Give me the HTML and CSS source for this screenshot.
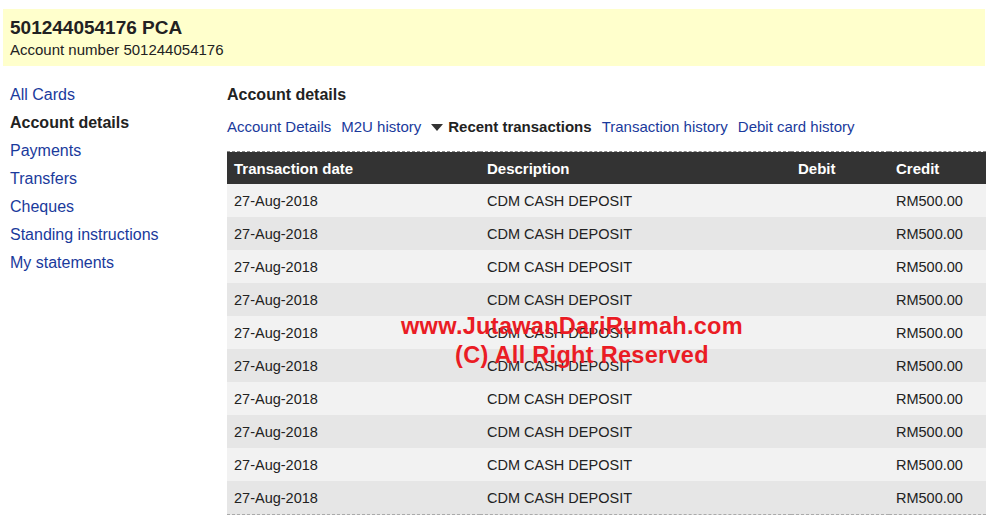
FILE: index.html
```html
<!DOCTYPE html>
<html lang="en">
<head>
  <meta charset="UTF-8" />
  <meta name="viewport" content="width=device-width, initial-scale=1.0"/>
  <title>Account details</title>
  <link rel="stylesheet" href="styles.css">
</head>
<body>
  <div class="account-head">
    <h1>501244054176 PCA</h1>
    <div class="acc-no">Account number 501244054176</div>
  </div>

  <div class="page">
    <ul class="side-nav">
      <li><a href="#">All Cards</a></li>
      <li class="current">Account details</li>
      <li><a href="#">Payments</a></li>
      <li><a href="#">Transfers</a></li>
      <li><a href="#">Cheques</a></li>
      <li><a href="#">Standing instructions</a></li>
      <li><a href="#">My statements</a></li>
    </ul>

    <div class="main">
      <h2>Account details</h2>
      <div class="tabs">
        <a href="#">Account Details</a>
        <a href="#">M2U history</a>
        <span class="active"><span class="caret"></span>Recent transactions</span>
        <a href="#">Transaction history</a>
        <a href="#">Debit card history</a>
      </div>

      <table class="tx">
        <thead>
          <tr>
            <th class="c-date">Transaction date</th>
            <th class="c-desc">Description</th>
            <th class="c-debit">Debit</th>
            <th class="c-credit">Credit</th>
          </tr>
        </thead>
        <tbody>
          <tr><td>27-Aug-2018</td><td>CDM CASH DEPOSIT</td><td></td><td>RM500.00</td></tr>
          <tr><td>27-Aug-2018</td><td>CDM CASH DEPOSIT</td><td></td><td>RM500.00</td></tr>
          <tr><td>27-Aug-2018</td><td>CDM CASH DEPOSIT</td><td></td><td>RM500.00</td></tr>
          <tr><td>27-Aug-2018</td><td>CDM CASH DEPOSIT</td><td></td><td>RM500.00</td></tr>
          <tr><td>27-Aug-2018</td><td>CDM CASH DEPOSIT</td><td></td><td>RM500.00</td></tr>
          <tr><td>27-Aug-2018</td><td>CDM CASH DEPOSIT</td><td></td><td>RM500.00</td></tr>
          <tr><td>27-Aug-2018</td><td>CDM CASH DEPOSIT</td><td></td><td>RM500.00</td></tr>
          <tr><td>27-Aug-2018</td><td>CDM CASH DEPOSIT</td><td></td><td>RM500.00</td></tr>
          <tr><td>27-Aug-2018</td><td>CDM CASH DEPOSIT</td><td></td><td>RM500.00</td></tr>
          <tr><td>27-Aug-2018</td><td>CDM CASH DEPOSIT</td><td></td><td>RM500.00</td></tr>
        </tbody>
      </table>

      <div class="watermark">
        <div class="wm-site">www.JutawanDariRumah.com</div>
        <div class="wm-copy">(C) All Right Reserved</div>
      </div>
    </div>
  </div>
</body>
</html>
```

FILE: styles.css
```css
body {
  margin: 0;
  font-family: "Liberation Sans", Arial, sans-serif;
  color: #222;
  background: #fff;
}
a {
  color: #1a3a9c;
  text-decoration: none;
}
.account-head {
  margin: 9px 1px 0 3px;
  padding: 7px 7px 7px;
  background-color: #ffffcc;
}
.account-head h1 {
  margin: 0;
  font-size: 19px;
  line-height: 23px;
  font-weight: bold;
}
.acc-no {
  font-size: 15px;
  line-height: 19px;
  margin-top: 1px;
}
.page {
  display: flex;
  margin-top: 15px;
}
.side-nav {
  list-style: none;
  margin: 0;
  padding: 0 0 0 10px;
  width: 217px;
  font-size: 16px;
  line-height: 28px;
}
.side-nav .current {
  font-weight: bold;
}
.main {
  flex: 1;
  position: relative;
}
.main h2 {
  margin: 0;
  font-size: 16px;
  line-height: 28px;
}
.tabs {
  display: flex;
  align-items: center;
  gap: 10px;
  margin-top: 6px;
  font-size: 15px;
  line-height: 24px;
}
.tabs .active {
  font-weight: bold;
  display: flex;
  align-items: center;
}
.caret {
  display: inline-block;
  width: 0;
  height: 0;
  border-left: 6px solid transparent;
  border-right: 6px solid transparent;
  border-top: 7px solid #333;
  margin-right: 5px;
}
.tx {
  width: 100%;
  margin-top: 12px;
  border-collapse: collapse;
  border-bottom: 1px dashed #aaa;
}
.tx th {
  background-color: #333;
  color: #fff;
  text-align: left;
  font-size: 15px;
  height: 32px;
  padding: 0 7px;
  border-top: 1px dashed #888;
}
.tx td {
  font-size: 14.5px;
  height: 33px;
  padding: 0 7px;
}
.tx tbody tr:nth-child(odd) td {
  background-color: #f2f2f2;
}
.tx tbody tr:nth-child(even) td {
  background-color: #e6e6e6;
}
.c-date { width: 239px; }
.c-desc { width: 297px; }
.c-debit { width: 84px; }
.watermark {
  position: absolute;
  left: 0;
  top: 231px;
  width: 690px;
  text-align: center;
  color: #ea1c24;
  font-size: 23.5px;
  font-weight: bold;
  line-height: 29px;
  letter-spacing: 0.3px;
}
.wm-copy {
  padding-left: 20px;
}
```
